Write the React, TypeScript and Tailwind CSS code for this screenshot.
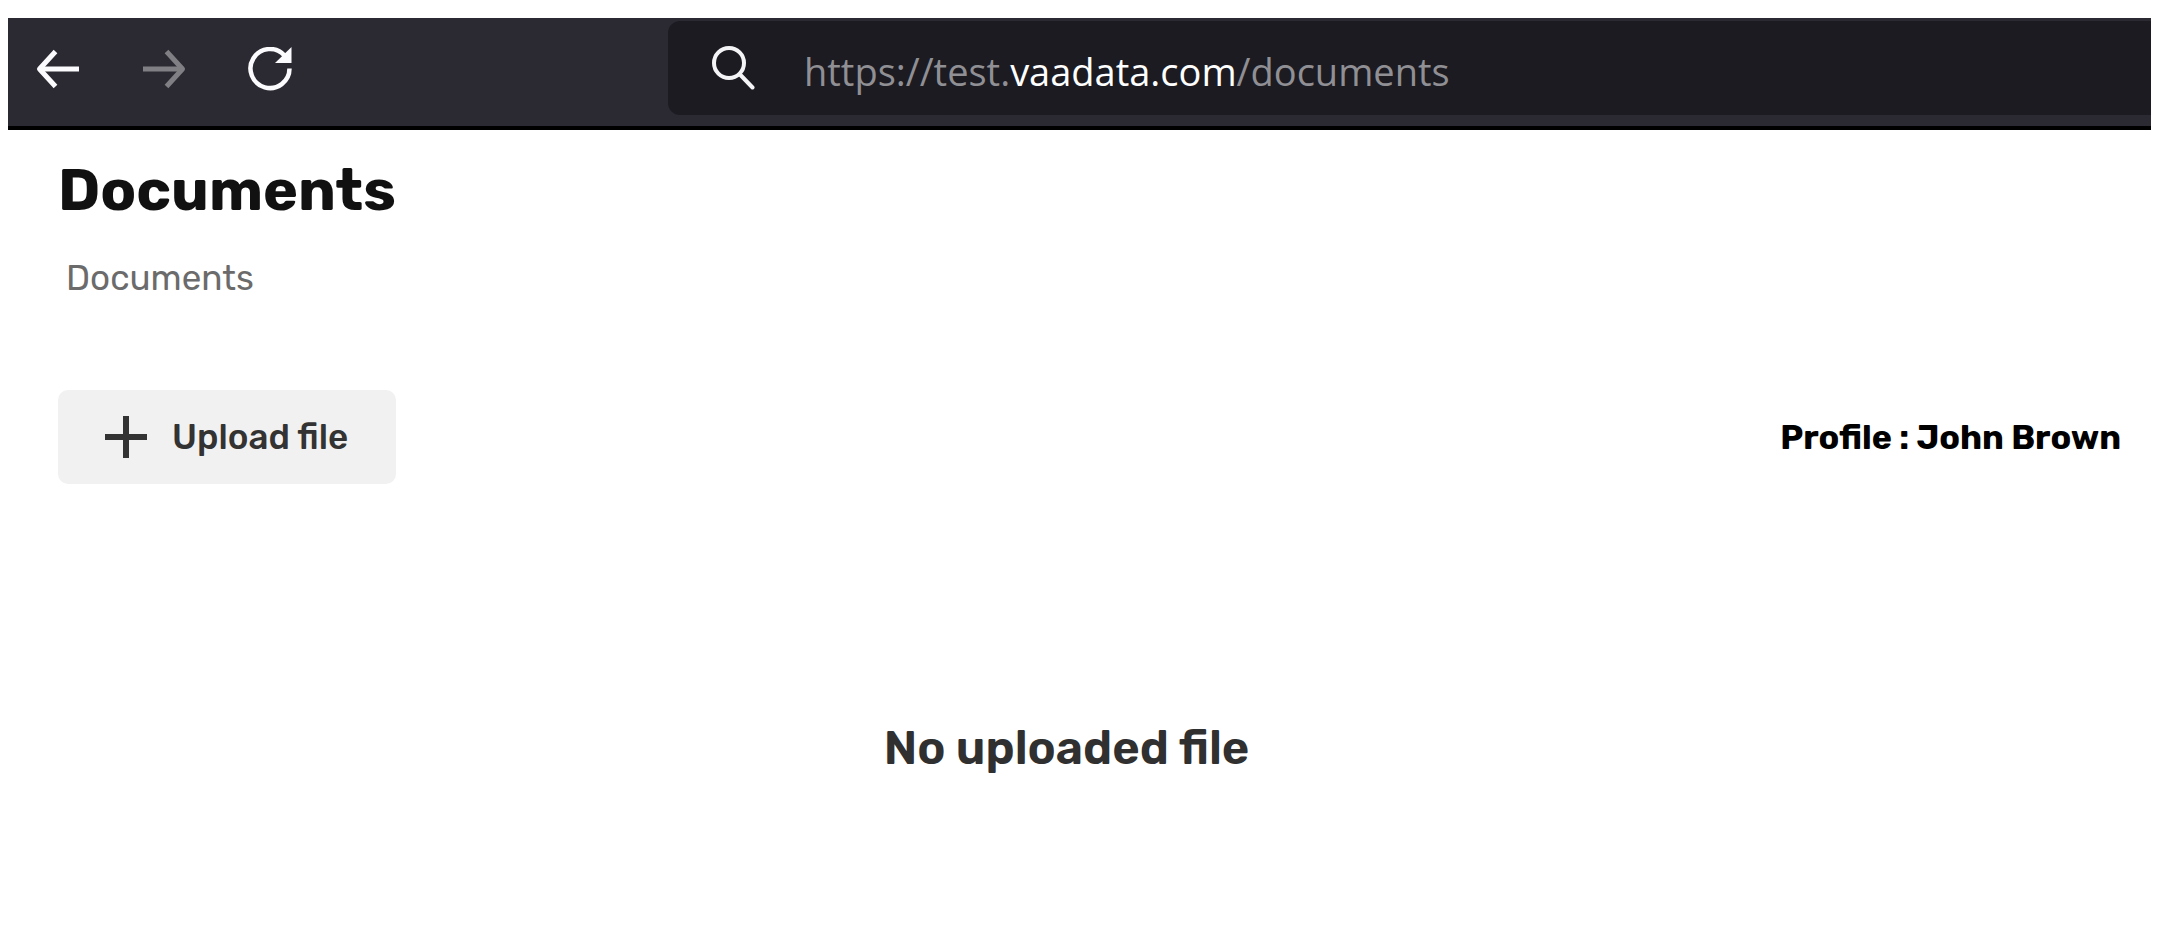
import { useState } from "react";

function BackIcon() {
  return (
    <svg viewBox="0 0 44 44" className="size-11" fill="none" stroke="currentColor" strokeWidth="5" aria-hidden="true">
      <path d="M43 22H4" />
      <path d="M19.5 4.5L3.5 22l16 17.5" strokeLinejoin="round" />
    </svg>
  );
}

function ForwardIcon() {
  return (
    <svg viewBox="0 0 44 44" className="size-11" fill="none" stroke="currentColor" strokeWidth="5" aria-hidden="true">
      <path d="M1 22h39" />
      <path d="M24.5 4.5L40.5 22l-16 17.5" strokeLinejoin="round" />
    </svg>
  );
}

function ReloadIcon() {
  return (
    <svg viewBox="0 0 44 44" className="size-11" fill="none" aria-hidden="true">
      <path d="M41.5 21.500A19.5 19.5 0 1 1 36.500 8.500" stroke="currentColor" strokeWidth="4.500" />
      <path d="M43.500 0V16H27z" fill="currentColor" />
    </svg>
  );
}

function SearchIcon() {
  return (
    <svg viewBox="0 0 44 44" className="size-11 shrink-0 text-[#f4f4f6]" fill="none" stroke="currentColor" strokeWidth="4" aria-hidden="true">
      <circle cx="17" cy="17" r="15" />
      <path d="M28 28.5L40.5 41.5" strokeLinecap="round" />
    </svg>
  );
}

function PlusIcon() {
  return (
    <svg viewBox="0 0 44 44" className="size-11" fill="none" stroke="currentColor" strokeWidth="6" aria-hidden="true">
      <path d="M1 22h42M22 1v42" />
    </svg>
  );
}

function AddressBar() {
  const [url, setUrl] = useState("https://test.vaadata.com/documents");
  const parts = url.match(/^(https?:\/\/(?:[^/]*\.)?)([^./]+\.[^./]+)(.*)$/);

  return (
    <div className="flex h-[94px] min-w-0 grow items-center gap-12 rounded-l-xl bg-[#1c1b22] pl-11">
      <SearchIcon />
      <div className="grid min-w-0 grow pt-1.5 font-['Open_Sans',sans-serif] text-[38px] leading-[52px]">
        <input
          type="text"
          aria-label="Address"
          value={url}
          onChange={(e) => setUrl(e.target.value)}
          className="col-start-1 row-start-1 min-w-0 bg-transparent text-transparent caret-white outline-none"
        />
        <div aria-hidden="true" className="pointer-events-none col-start-1 row-start-1 overflow-hidden whitespace-pre text-[#8f8f94]">
          {parts ? (
            <>
              {parts[1]}
              <span className="text-white">{parts[2]}</span>
              {parts[3]}
            </>
          ) : (
            url
          )}
        </div>
      </div>
    </div>
  );
}

export default function App() {
  return (
    <div className="min-h-screen bg-white pt-[18px] pr-[9px] pl-2 font-[Rubik,Roboto,sans-serif]">
      <header className="flex items-start border-b-4 border-black bg-[#2b2a33] pt-[3px] pb-[11px]">
        <nav aria-label="Browser" className="flex w-[660px] shrink-0 gap-[62px] pt-[26px] pl-7 text-[#fbfbfe]">
          <button type="button" aria-label="Back">
            <BackIcon />
          </button>
          <button type="button" aria-label="Forward" className="text-[#808084]" disabled>
            <ForwardIcon />
          </button>
          <button type="button" aria-label="Reload">
            <ReloadIcon />
          </button>
        </nav>
        <AddressBar />
      </header>

      <main className="pt-7 pl-[50px]">
        <h1 className="text-[59px] leading-[64px] font-bold text-[#111111]">Documents</h1>
        <nav aria-label="Breadcrumb" className="pt-8 pl-2">
          <a href="#documents" className="block w-fit text-[35px] leading-[48px] text-[#6b6b6b]">
            Documents
          </a>
        </nav>

        <div className="flex items-center justify-between pt-[88px] pr-[30px]">
          <button
            type="button"
            className="flex h-[94px] items-center gap-6 rounded-[10px] bg-[#f1f1f1] pr-12 pl-[46px] text-[35px] font-medium text-[#333333]"
          >
            <PlusIcon />
            Upload file
          </button>
          <p className="text-[34px] font-bold text-black">Profile : John Brown</p>
        </div>

        <p className="pt-[232px] pr-[76px] text-center text-[47px] leading-[64px] font-semibold text-[#303030]">
          No uploaded file
        </p>
      </main>
    </div>
  );
}
